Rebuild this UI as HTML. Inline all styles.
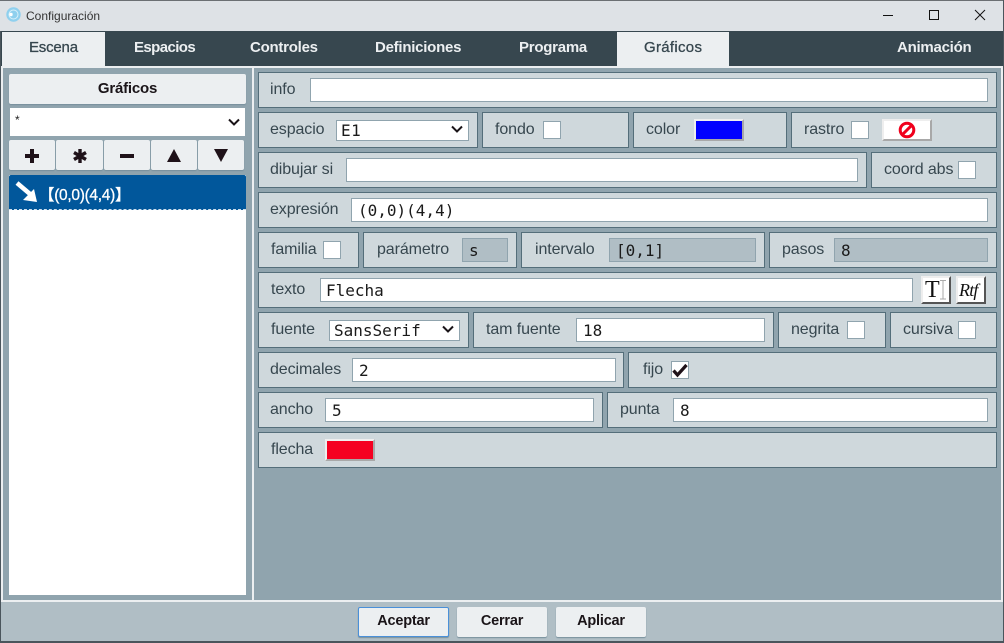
<!DOCTYPE html>
<html><head><meta charset="utf-8"><style>
html,body{margin:0;padding:0;width:1004px;height:643px;overflow:hidden;background:#90a4ae}
*{box-sizing:border-box}
div,span{position:absolute}
body{font-family:"Liberation Sans",sans-serif;font-size:16px;color:#37474f}
.p{background:#cfd8dc;border:1px solid #546e7a;border-width:1px;height:36px}
.l{white-space:nowrap;line-height:20px;height:20px;letter-spacing:-.1px}
.i{background:#fff;border:1px solid #90a4ae;height:24px;font-family:"DejaVu Sans Mono",monospace;font-size:16px;line-height:24px;color:#1a1a1a;padding-left:6px;white-space:pre}
.g{background:#b0bec5}
.c{background:#fff;border:1px solid #90a4ae;width:18px;height:18px}
.s{background:#fff;border:1px solid #90a4ae;height:21px;font-family:"DejaVu Sans Mono",monospace;font-size:16px;line-height:20px;color:#1a1a1a;padding-left:4px;white-space:pre}
.t{color:#eceff1;font-weight:bold;font-size:15px;line-height:20px;top:38px;white-space:nowrap;letter-spacing:-.25px}
.b{background:#eceff1;border-radius:2px;box-shadow:0 1px 1px #78909c;text-align:center;color:#1a1418;font-weight:bold}
svg{position:absolute;overflow:visible}
</style></head><body>
<div style="left:0;top:0;width:1004px;height:31px;background:#dee2e6"></div>
<div style="left:0;top:0;width:1004px;height:1px;background:#6b6f73"></div>
<svg style="left:6px;top:7px" width="15" height="15"><circle cx="7.5" cy="7.5" r="7.2" fill="#8fd0ee"/><circle cx="7.5" cy="7.5" r="4.5" fill="none" stroke="#d8f0fa"/><circle cx="5" cy="7.5" r="1.7" fill="#fff"/></svg>
<div class="l" style="left:26px;top:6px;font-size:12px;color:#333;letter-spacing:0">Configuración</div>
<svg style="left:880px;top:8px" width="110" height="16"><path d="M3 7.5H13" stroke="#111" fill="none"/><rect x="49.5" y="2.5" width="9" height="9" fill="none" stroke="#111"/><path d="M95 2L105 12M105 2L95 12" stroke="#111" fill="none"/></svg>

<div style="left:0;top:31px;width:1004px;height:35px;background:#37474f"></div>
<div style="left:2px;top:32px;width:103px;height:34px;background:#eceff1"></div>
<div style="left:617px;top:32px;width:112px;height:34px;background:#eceff1"></div>
<div class="t" style="left:29px;color:#37474f;font-weight:normal;-webkit-text-stroke:.3px #37474f;letter-spacing:-.2px">Escena</div>
<div class="t" style="left:134px;letter-spacing:-.6px">Espacios</div>
<div class="t" style="left:250px">Controles</div>
<div class="t" style="left:375px">Definiciones</div>
<div class="t" style="left:519px">Programa</div>
<div class="t" style="left:644px;color:#37474f;font-weight:normal;-webkit-text-stroke:.3px #37474f;letter-spacing:.3px">Gráficos</div>
<div class="t" style="left:897px">Animación</div>

<div style="left:0;top:66px;width:1004px;height:2px;background:#eceff1"></div>
<div style="left:0;top:68px;width:3px;height:532px;background:#eceff1"></div>
<div style="left:252px;top:68px;width:2px;height:532px;background:#eceff1"></div>
<div style="left:1001px;top:68px;width:3px;height:532px;background:#eceff1"></div>
<div style="left:0;top:600px;width:1004px;height:2px;background:#eceff1"></div>
<div style="left:0;top:602px;width:1004px;height:41px;background:#b0bec5"></div>
<div style="left:0;top:641px;width:1004px;height:2px;background:#4a555c"></div>
<div style="left:0;top:31px;width:1px;height:612px;background:#4a555c"></div>
<div style="left:1003px;top:0;width:1px;height:643px;background:#4a555c"></div>

<div class="b" style="left:9px;top:74px;width:237px;height:30px;line-height:30px;font-size:15px;letter-spacing:-.2px">Gráficos</div>
<div style="left:10px;top:108px;width:235px;height:28px;background:#fff"></div>
<div class="l" style="left:15px;top:110px;font-size:12px;color:#222">*</div>
<svg style="left:227px;top:118px" width="14" height="9"><path d="M2 1.5L7 6.5L12 1.5" fill="none" stroke="#1a1418" stroke-width="2"/></svg>
<div class="b" style="left:9px;top:140px;width:46px;height:30px"></div>
<div class="b" style="left:56px;top:140px;width:47px;height:30px"></div>
<div class="b" style="left:104px;top:140px;width:46px;height:30px"></div>
<div class="b" style="left:151px;top:140px;width:46px;height:30px"></div>
<div class="b" style="left:198px;top:140px;width:46px;height:30px"></div>
<svg style="left:0;top:140px" width="250" height="30"><path d="M32 9V23M25 16H39" stroke="#1f1219" stroke-width="4" fill="none"/><path d="M80 9V23M74 12.5L86 19.5M86 12.5L74 19.5" stroke="#1f1219" stroke-width="3.4" fill="none"/><path d="M120 16H134" stroke="#1f1219" stroke-width="4" fill="none"/><path d="M174 9L181 22H167Z" fill="#1f1219"/><path d="M214 9H228L221 22Z" fill="#1f1219"/></svg>
<div style="left:9px;top:175px;width:237px;height:420px;background:#fff"></div>
<div style="left:9px;top:175px;width:237px;height:35px;background:#01579b;border-bottom:1px dashed #cfe0ee;border-radius:2px 2px 0 0"></div>
<svg style="left:14px;top:181px" width="26" height="22"><path d="M3 2L16 13" stroke="#fff" stroke-width="4.5" fill="none"/><path d="M23 21L9 19L20 8Z" fill="#fff"/></svg>
<div class="l" style="left:39px;top:186px;color:#fff;font-weight:normal;font-size:15.5px;-webkit-text-stroke:.3px #fff;font-family:'Liberation Sans','Noto Sans CJK SC',sans-serif;letter-spacing:-.3px">【(0,0)(4,4)】</div>

<div class="p" style="left:258px;top:72px;width:739px"></div>
<div class="l" style="left:270px;top:80px">info</div>
<div class="i" style="left:310px;top:78px;width:678px"></div>

<div class="p" style="left:258px;top:112px;width:220px"></div>
<div class="l" style="left:270px;top:120px">espacio</div>
<div class="s" style="left:336px;top:120px;width:133px;letter-spacing:.5px">E1</div>
<svg style="left:450px;top:125px" width="14" height="9"><path d="M2 1.5L7 6.5L12 1.5" fill="none" stroke="#1a1418" stroke-width="2"/></svg>
<div class="p" style="left:482px;top:112px;width:147px"></div>
<div class="l" style="left:495px;top:120px">fondo</div>
<div class="c" style="left:543px;top:121px"></div>
<div class="p" style="left:633px;top:112px;width:154px"></div>
<div class="l" style="left:646px;top:120px">color</div>
<div style="left:694px;top:119px;width:50px;height:22px;background:#0000ff;border:2px solid;border-color:#eee #a8a8a8 #a8a8a8 #eee"></div>
<div class="p" style="left:791px;top:112px;width:206px"></div>
<div class="l" style="left:804px;top:120px">rastro</div>
<div class="c" style="left:851px;top:121px"></div>
<div style="left:882px;top:119px;width:50px;height:22px;background:#fff;border:2px solid;border-color:#eee #a8a8a8 #a8a8a8 #eee"></div>
<svg style="left:898px;top:121px" width="18" height="18"><circle cx="9" cy="9" r="6.8" fill="#fff" stroke="#f0001c" stroke-width="3"/><path d="M4.5 13.5L13.5 4.5" stroke="#f0001c" stroke-width="3"/></svg>

<div class="p" style="left:258px;top:152px;width:609px"></div>
<div class="l" style="left:270px;top:160px">dibujar si</div>
<div class="i" style="left:346px;top:158px;width:512px"></div>
<div class="p" style="left:871px;top:152px;width:126px"></div>
<div class="l" style="left:884px;top:160px">coord abs</div>
<div class="c" style="left:958px;top:161px"></div>

<div class="p" style="left:258px;top:192px;width:739px"></div>
<div class="l" style="left:270px;top:200px">expresión</div>
<div class="i" style="left:351px;top:198px;width:637px">(0,0)(4,4)</div>

<div class="p" style="left:258px;top:232px;width:101px"></div>
<div class="l" style="left:271px;top:240px">familia</div>
<div class="c" style="left:323px;top:241px"></div>
<div class="p" style="left:363px;top:232px;width:154px"></div>
<div class="l" style="left:377px;top:240px">parámetro</div>
<div class="i g" style="left:462px;top:238px;width:46px">s</div>
<div class="p" style="left:521px;top:232px;width:244px"></div>
<div class="l" style="left:535px;top:240px">intervalo</div>
<div class="i g" style="left:609px;top:238px;width:147px">[0,1]</div>
<div class="p" style="left:769px;top:232px;width:228px"></div>
<div class="l" style="left:782px;top:240px">pasos</div>
<div class="i g" style="left:834px;top:238px;width:154px">8</div>

<div class="p" style="left:258px;top:272px;width:739px"></div>
<div class="l" style="left:271px;top:280px">texto</div>
<div class="i" style="left:320px;top:278px;width:593px;padding-left:5px">Flecha</div>
<div style="left:921px;top:276px;width:30px;height:28px;background:#fff;border:2px solid;border-color:#eee #555 #555 #eee"></div>
<div style="left:925px;top:277px;font-family:'Liberation Serif',serif;font-size:24px;line-height:26px;color:#111">T</div>
<svg style="left:938px;top:279px" width="10" height="22"><path d="M2 1.5H8M5 1.5V20M2 20H8" stroke="#aaa" fill="none"/></svg>
<div style="left:956px;top:276px;width:30px;height:28px;background:#fff;border:2px solid;border-color:#eee #555 #555 #eee"></div>
<div style="left:959px;top:279px;font-family:'Liberation Serif',serif;font-style:italic;font-size:18px;line-height:22px;color:#111;letter-spacing:-.8px">Rtf</div>

<div class="p" style="left:258px;top:312px;width:211px"></div>
<div class="l" style="left:271px;top:320px">fuente</div>
<div class="s" style="left:329px;top:320px;width:131px">SansSerif</div>
<svg style="left:441px;top:325px" width="14" height="9"><path d="M2 1.5L7 6.5L12 1.5" fill="none" stroke="#1a1418" stroke-width="2"/></svg>
<div class="p" style="left:473px;top:312px;width:301px"></div>
<div class="l" style="left:486px;top:320px">tam fuente</div>
<div class="i" style="left:576px;top:318px;width:189px">18</div>
<div class="p" style="left:778px;top:312px;width:108px"></div>
<div class="l" style="left:791px;top:320px">negrita</div>
<div class="c" style="left:847px;top:321px"></div>
<div class="p" style="left:890px;top:312px;width:107px"></div>
<div class="l" style="left:903px;top:320px">cursiva</div>
<div class="c" style="left:958px;top:321px"></div>

<div class="p" style="left:258px;top:352px;width:366px"></div>
<div class="l" style="left:270px;top:360px">decimales</div>
<div class="i" style="left:352px;top:358px;width:264px">2</div>
<div class="p" style="left:628px;top:352px;width:369px"></div>
<div class="l" style="left:643px;top:360px">fijo</div>
<div class="c" style="left:671px;top:361px"></div>
<svg style="left:671px;top:361px" width="18" height="18"><path d="M2.5 9.5L6.5 14L15.5 4" fill="none" stroke="#1f1219" stroke-width="3.2"/></svg>

<div class="p" style="left:258px;top:392px;width:345px"></div>
<div class="l" style="left:270px;top:400px">ancho</div>
<div class="i" style="left:325px;top:398px;width:269px">5</div>
<div class="p" style="left:607px;top:392px;width:390px"></div>
<div class="l" style="left:620px;top:400px">punta</div>
<div class="i" style="left:673px;top:398px;width:315px">8</div>

<div class="p" style="left:258px;top:432px;width:739px"></div>
<div class="l" style="left:271px;top:440px">flecha</div>
<div style="left:325px;top:439px;width:50px;height:22px;background:#f50021;border:2px solid;border-color:#eee #a8a8a8 #a8a8a8 #eee"></div>

<div class="b" style="left:358px;top:607px;width:91px;height:30px;line-height:27px;font-size:14.5px;border:1px solid #4a90d9;letter-spacing:-.2px">Aceptar</div>
<div class="b" style="left:457px;top:607px;width:90px;height:30px;line-height:28px;font-size:14.5px;letter-spacing:-.2px">Cerrar</div>
<div class="b" style="left:556px;top:607px;width:90px;height:30px;line-height:28px;font-size:14.5px;letter-spacing:-.2px">Aplicar</div>
</body></html>
